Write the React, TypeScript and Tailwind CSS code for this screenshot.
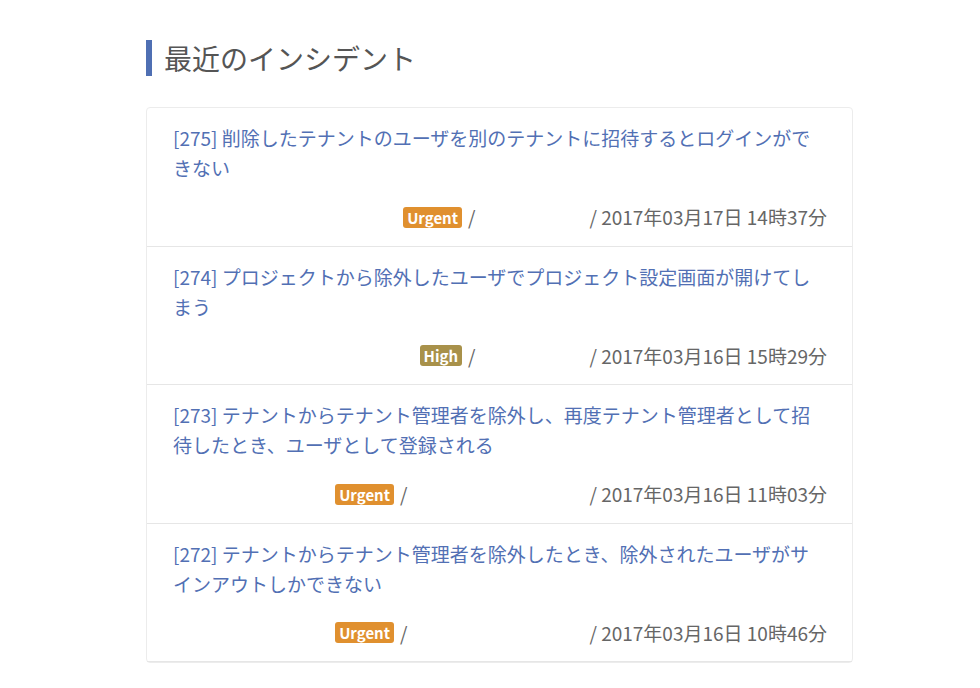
import React from 'react';

type Incident = {
  id: number;
  title: string;
  priority: 'Urgent' | 'High';
  nameWidth: string;
  date: string;
};

const incidents: Incident[] = [
  {
    id: 275,
    title: '削除したテナントのユーザを別のテナントに招待するとログインができない',
    priority: 'Urgent',
    nameWidth: 'w-[114px]',
    date: '2017年03月17日 14時37分',
  },
  {
    id: 274,
    title: 'プロジェクトから除外したユーザでプロジェクト設定画面が開けてしまう',
    priority: 'High',
    nameWidth: 'w-[114px]',
    date: '2017年03月16日 15時29分',
  },
  {
    id: 273,
    title: 'テナントからテナント管理者を除外し、再度テナント管理者として招待したとき、ユーザとして登録される',
    priority: 'Urgent',
    nameWidth: 'w-[182px]',
    date: '2017年03月16日 11時03分',
  },
  {
    id: 272,
    title: 'テナントからテナント管理者を除外したとき、除外されたユーザがサインアウトしかできない',
    priority: 'Urgent',
    nameWidth: 'w-[182px]',
    date: '2017年03月16日 10時46分',
  },
];

function PriorityBadge({ priority }: { priority: Incident['priority'] }) {
  const color = priority === 'Urgent' ? 'bg-[#e0902f]' : 'bg-[#a8914a]';
  return (
    <span
      className={`${color} inline-block rounded-[3px] px-[4px] text-[15px] font-bold leading-[21px] text-white`}
    >
      {priority}
    </span>
  );
}

function IncidentRow({ incident }: { incident: Incident }) {
  const label = `[${incident.id}] ${incident.title}`;
  return (
    <li className="border-b border-[#e6e6e6] pl-[26px] pr-[25px] pt-[15px] pb-[16.5px]">
      <a className="block pr-[7px] text-[19px] leading-[30px] text-[#5270b4]">{label}</a>
      {/* 担当者名はマスク */}
      <div className="mt-[22px] flex items-center justify-end text-[19px] leading-[24px] text-[#666]">
        <PriorityBadge priority={incident.priority} />
        <span className="ml-[6px]">/</span>
        <span className={`inline-block ${incident.nameWidth}`}></span>
        <span>{`/ ${incident.date}`}</span>
      </div>
    </li>
  );
}

export default function App() {
  return (
    <div
      className="min-h-[688px] bg-white pt-[40px] pl-[146px]"
      style={{ fontFamily: '"Noto Sans CJK JP", "Noto Sans", sans-serif' }}
    >
      <h2 className="flex items-center">
        <span className="h-[36px] w-[6px] bg-[#4f6fb3]"></span>
        <span className="ml-[12px] text-[28px] font-normal leading-[36px] text-[#555]">
          最近のインシデント
        </span>
      </h2>

      <ul className="mt-[31px] w-[707px] rounded-[4px] border border-[#ececec]">
        {incidents.map(incident => (
          <IncidentRow key={incident.id} incident={incident} />
        ))}
      </ul>
    </div>
  );
}
